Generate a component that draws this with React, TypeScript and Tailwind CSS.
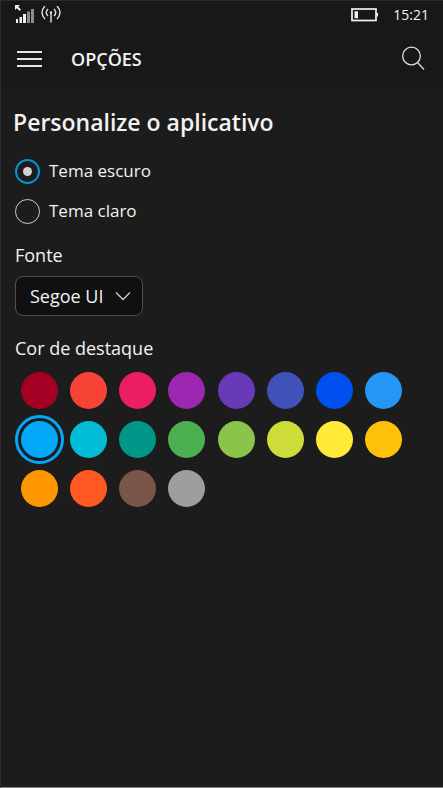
import { useState } from "react";

const accents = [
  { name: "Vermelho escuro", value: "#a30024" },
  { name: "Vermelho", value: "#f74437" },
  { name: "Rosa", value: "#ea1e63" },
  { name: "Roxo", value: "#9c28b1" },
  { name: "Violeta", value: "#683ab7" },
  { name: "Índigo", value: "#4051b9" },
  { name: "Azul forte", value: "#0050f0" },
  { name: "Azul", value: "#2496f5" },
  { name: "Azul claro", value: "#03a9f8" },
  { name: "Ciano", value: "#00bcd7" },
  { name: "Verde azulado", value: "#009688" },
  { name: "Verde", value: "#4cb050" },
  { name: "Verde claro", value: "#8bc44a" },
  { name: "Lima", value: "#cddc38" },
  { name: "Amarelo", value: "#ffea3a" },
  { name: "Âmbar", value: "#ffc107" },
  { name: "Laranja", value: "#ff9800" },
  { name: "Laranja escuro", value: "#ff5822" },
  { name: "Marrom", value: "#7a5648" },
  { name: "Cinza", value: "#9e9e9e" },
];

function StatusBar() {
  return (
    <div className="flex h-7 items-center justify-between pr-3.5 pl-3">
      <div className="flex items-center gap-1.5">
        <svg width="22" height="20" viewBox="0 0 22 20" aria-label="Sinal">
          <path d="M2 0h5L5.200 1.800 8 4.600 6.600 6 3.800 3.200 2 5z" fill="#f2f2f2" />
          <path d="M3 14h2v4H3zM6.500 12h2.500v6H6.500zM10 9h3v9h-3z" fill="#f2f2f2" />
          <path d="M14 6.500h3V18h-3zM18 4h3v14h-3z" fill="#8c8c8c" />
        </svg>
        <svg width="20" height="18" viewBox="0 0 20 18" fill="none" stroke="#e2e2e2" strokeWidth="1.4" aria-label="Dados móveis">
          <path d="M4 0Q-2 6.500 4 13M16 0q6 6.500 0 13M7 3Q3.500 6.500 7 10M13 3q3.500 3.500 0 7M10 6v10.500" />
          <circle cx="10" cy="6.500" r="1.200" fill="#e2e2e2" stroke="none" />
        </svg>
      </div>
      <div className="flex items-center gap-3.5">
        <svg width="28" height="14" viewBox="0 0 28 14" aria-label="Bateria">
          <rect x="1" y="1" width="24" height="11.500" fill="none" stroke="#f2f2f2" strokeWidth="1.700" />
          <path d="M3.500 3.200h3.500v7H3.500zM25.500 5h1.500v3.500h-1.500z" fill="#f2f2f2" />
        </svg>
        <time className="text-sm leading-5">15:21</time>
      </div>
    </div>
  );
}

function Header() {
  return (
    <header className="flex h-[59px] items-center pr-[18px] pl-4">
      <button type="button" aria-label="Menu" className="flex w-[25px] flex-col gap-[5px]">
        <span className="h-0.5 bg-[#e6e6e6]" />
        <span className="h-0.5 bg-[#e6e6e6]" />
        <span className="h-0.5 bg-[#e6e6e6]" />
      </button>
      <h1 className="ml-[29px] flex-1 text-lg leading-6 font-semibold">OPÇÕES</h1>
      <button type="button" aria-label="Pesquisar">
        <svg width="24" height="26" viewBox="0 0 24 26" fill="none" stroke="#dcdcdc" strokeWidth="1.300">
          <circle cx="10.500" cy="10" r="8.800" />
          <path d="M16.500 16.500 23 23.500" />
        </svg>
      </button>
    </header>
  );
}

function ThemeOption({ label, checked, onSelect }: { label: string; checked: boolean; onSelect: () => void }) {
  return (
    <label className="flex h-10 items-center gap-[9px] text-[17px] leading-6">
      <input
        type="radio"
        name="tema"
        checked={checked}
        onChange={onSelect}
        className="grid size-[25px] appearance-none place-items-center rounded-full border border-[#cccccc] before:size-[9px] before:rounded-full checked:border-2 checked:border-[#0693d6] checked:before:bg-[#d2d2d2]"
      />
      {label}
    </label>
  );
}

export default function App() {
  const [theme, setTheme] = useState("escuro");
  const [accent, setAccent] = useState("#03a9f8");

  return (
    <div className="flex min-h-screen flex-col border-b border-l border-b-[#858085] border-l-[#2a2a2a] bg-[#1c1c1c] font-['Open_Sans','Noto_Sans',sans-serif] text-[#f2f2f2]">
      <div className="border-t border-[#2a2a2a] bg-[#181818]">
        <StatusBar />
        <Header />
      </div>
      <main className="pr-[35px] pl-3.5">
        <h2 className="-ml-0.5 pt-[18px] text-[23px] leading-8 font-semibold">Personalize o aplicativo</h2>
        <div role="radiogroup" aria-label="Tema" className="pt-[13px]">
          <ThemeOption label="Tema escuro" checked={theme === "escuro"} onSelect={() => setTheme("escuro")} />
          <ThemeOption label="Tema claro" checked={theme === "claro"} onSelect={() => setTheme("claro")} />
        </div>
        <label htmlFor="fonte" className="mt-3 block text-lg leading-6">
          Fonte
        </label>
        <div className="mt-[9px] grid w-32">
          <select
            id="fonte"
            className="col-start-1 row-start-1 h-10 appearance-none rounded-lg border border-[#505050] bg-[#101010] pl-3.5 text-lg leading-6"
          >
            <option>Segoe UI</option>
          </select>
          <svg width="16" height="10" viewBox="0 0 16 10" fill="none" stroke="#cccccc" strokeWidth="1.300" className="pointer-events-none col-start-1 row-start-1 mr-3 self-center justify-self-end" aria-hidden="true">
            <path d="M1 1.500 8 8.500 15 1.500" />
          </svg>
        </div>
        <fieldset>
          <legend className="pt-5 pb-1.5 text-lg leading-6">Cor de destaque</legend>
          <div className="grid auto-rows-[49px] grid-cols-8 place-items-center">
            {accents.map((c) => (
              <input
                key={c.value}
                type="radio"
                name="destaque"
                aria-label={c.name}
                checked={accent === c.value}
                onChange={() => setAccent(c.value)}
                style={{ backgroundColor: c.value }}
                className="size-[37px] appearance-none rounded-full outline-[#03a9f8] checked:outline-3 checked:outline-offset-3"
              />
            ))}
          </div>
        </fieldset>
      </main>
    </div>
  );
}
